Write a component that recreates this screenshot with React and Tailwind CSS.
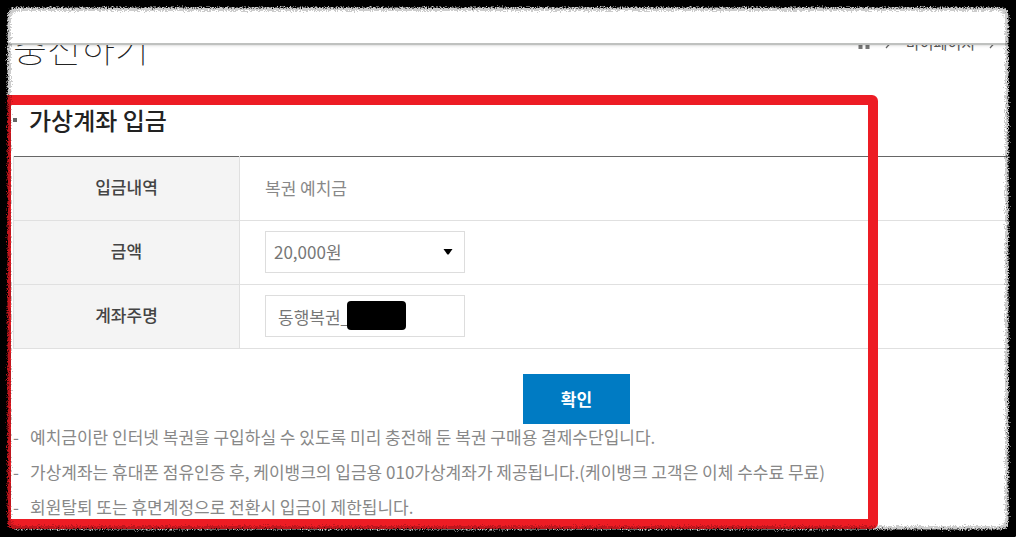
const notes = [
  "예치금이란 인터넷 복권을 구입하실 수 있도록 미리 충전해 둔 복권 구매용 결제수단입니다.",
  "가상계좌는 휴대폰 점유인증 후, 케이뱅크의 입금용 010가상계좌가 제공됩니다.(케이뱅크 고객은 이체 수수료 무료)",
  "회원탈퇴 또는 휴면계정으로 전환시 입금이 제한됩니다.",
];

const thClass = "w-[226px] border-x border-[#e0e0e0] bg-[#f4f4f4] pb-1 text-center font-medium text-[#444]";
const tdClass = "h-16 pb-px pl-[25px]";

const HomeIcon = () => (
  <svg className="h-3 w-[14px]" viewBox="0 0 14 12">
    <path d="M7 0L14 6H12.5V12H8.5V8H5.5V12H1.5V6H0Z" fill="#777" />
  </svg>
);

const Chevron = () => (
  <svg className="h-3 w-[7px]" viewBox="0 0 7 12">
    <path d="M1 0L6 5.5L1 11" fill="none" stroke="#666" strokeWidth="1.2" />
  </svg>
);

// Torn paper edge around the whole page
const RoughEdge = () => (
  <svg className="pointer-events-none absolute inset-0 z-20 h-full w-full" aria-hidden="true">
    <defs>
      <filter id="soft" filterUnits="userSpaceOnUse" x="0" y="0" width="100%" height="100%">
        <feTurbulence type="fractalNoise" baseFrequency="0.7" numOctaves="2" seed="4" result="n" />
        <feGaussianBlur in="SourceGraphic" stdDeviation="0.6" result="b" />
        <feDisplacementMap in="b" in2="n" scale="7" xChannelSelector="R" yChannelSelector="G" />
      </filter>
      <filter id="rough" filterUnits="userSpaceOnUse" x="0" y="0" width="100%" height="100%">
        <feTurbulence type="fractalNoise" baseFrequency="0.8" numOctaves="2" seed="9" result="n" />
        <feDisplacementMap in="SourceGraphic" in2="n" scale="6" xChannelSelector="R" yChannelSelector="G" />
      </filter>
    </defs>
    <rect width="100%" height="100%" rx="18" fill="none" stroke="#000" strokeOpacity="0.2" strokeWidth="22" filter="url(#soft)" />
    <rect width="100%" height="100%" rx="15" fill="none" stroke="#000" strokeWidth="15" filter="url(#rough)" />
    <rect width="100%" height="100%" rx="14" fill="none" stroke="#000" strokeWidth="10" />
  </svg>
);

const App = () => {
  return (
    <div className="relative min-h-screen overflow-hidden bg-white font-['Noto_Sans_CJK_KR',sans-serif] text-[17px] text-[#888]">
      <header className="relative z-10 h-[45px] border-b-2 border-[#bfc1bf] bg-white shadow-sm" />

      <main className="pl-[13px]">
        {/* Page title, scrolled half under the header */}
        <div className="-mt-5 flex h-[47px] items-end justify-between">
          <h1 className="pb-1 text-[37px] font-thin leading-[42px] text-[#222]">충전하기</h1>
          <nav className="mr-5 flex items-center gap-[14px] self-start pt-2 text-[15px] leading-5 text-[#555]">
            <a href="#" aria-label="홈">
              <HomeIcon />
            </a>
            <Chevron />
            <a href="#">마이페이지</a>
            <Chevron />
          </nav>
        </div>

        <h2 className="mt-[31px] flex h-[53px] items-start gap-3 text-[24px] font-medium leading-[34px] text-[#222]">
          <span className="mt-[15px] h-1 w-1 bg-[#666]" />
          가상계좌 입금
        </h2>

        <table className="w-full border-collapse border-t border-[#666]">
          <tbody>
            <tr className="border-b border-[#e0e0e0]">
              <th scope="row" className={thClass}>입금내역</th>
              <td className={tdClass}>복권 예치금</td>
            </tr>
            <tr className="border-b border-[#e0e0e0]">
              <th scope="row" className={thClass}>
                <label htmlFor="amount">금액</label>
              </th>
              <td className={tdClass}>
                <div className="relative w-[200px]">
                  <select id="amount" className="block h-[42px] w-full appearance-none border border-[#ddd] bg-white px-2 text-[#777]">
                    <option>20,000원</option>
                  </select>
                  <svg className="pointer-events-none absolute right-3 top-[18px] h-[6px] w-[10px]" viewBox="0 0 10 6">
                    <path d="M0.5 0H9.5L5.8 5.2Q5 6 4.2 5.2Z" fill="#000" />
                  </svg>
                </div>
              </td>
            </tr>
            <tr className="border-b border-[#e0e0e0]">
              <th scope="row" className={thClass}>
                <label htmlFor="holder">계좌주명</label>
              </th>
              <td className={tdClass}>
                <div className="relative w-[200px]">
                  <input id="holder" type="text" defaultValue="동행복권_" className="block h-[42px] w-full border border-[#ddd] bg-white px-3 text-[#777]" />
                  <span className="absolute left-[82px] top-[6px] h-[29px] w-[59px] rounded bg-black" />
                </div>
              </td>
            </tr>
          </tbody>
        </table>

        <div className="mt-[25px] flex justify-center pl-[124px]">
          <button type="button" className="h-[50px] w-[107px] bg-[#007bc3] pb-px font-bold text-white">확인</button>
        </div>

        <ul className="-mt-px flex flex-col gap-[7px] pb-4 leading-7">
          {notes.map((note) => (
            <li key={note} className="flex gap-[11px]">
              <span className="w-[6px]">-</span>
              {note}
            </li>
          ))}
        </ul>
      </main>

      <div className="pointer-events-none absolute bottom-2 left-px right-[138px] top-[95px] rounded-md border-[10px] border-[#ed1c24]" />
      <RoughEdge />
    </div>
  );
};

export default App;
